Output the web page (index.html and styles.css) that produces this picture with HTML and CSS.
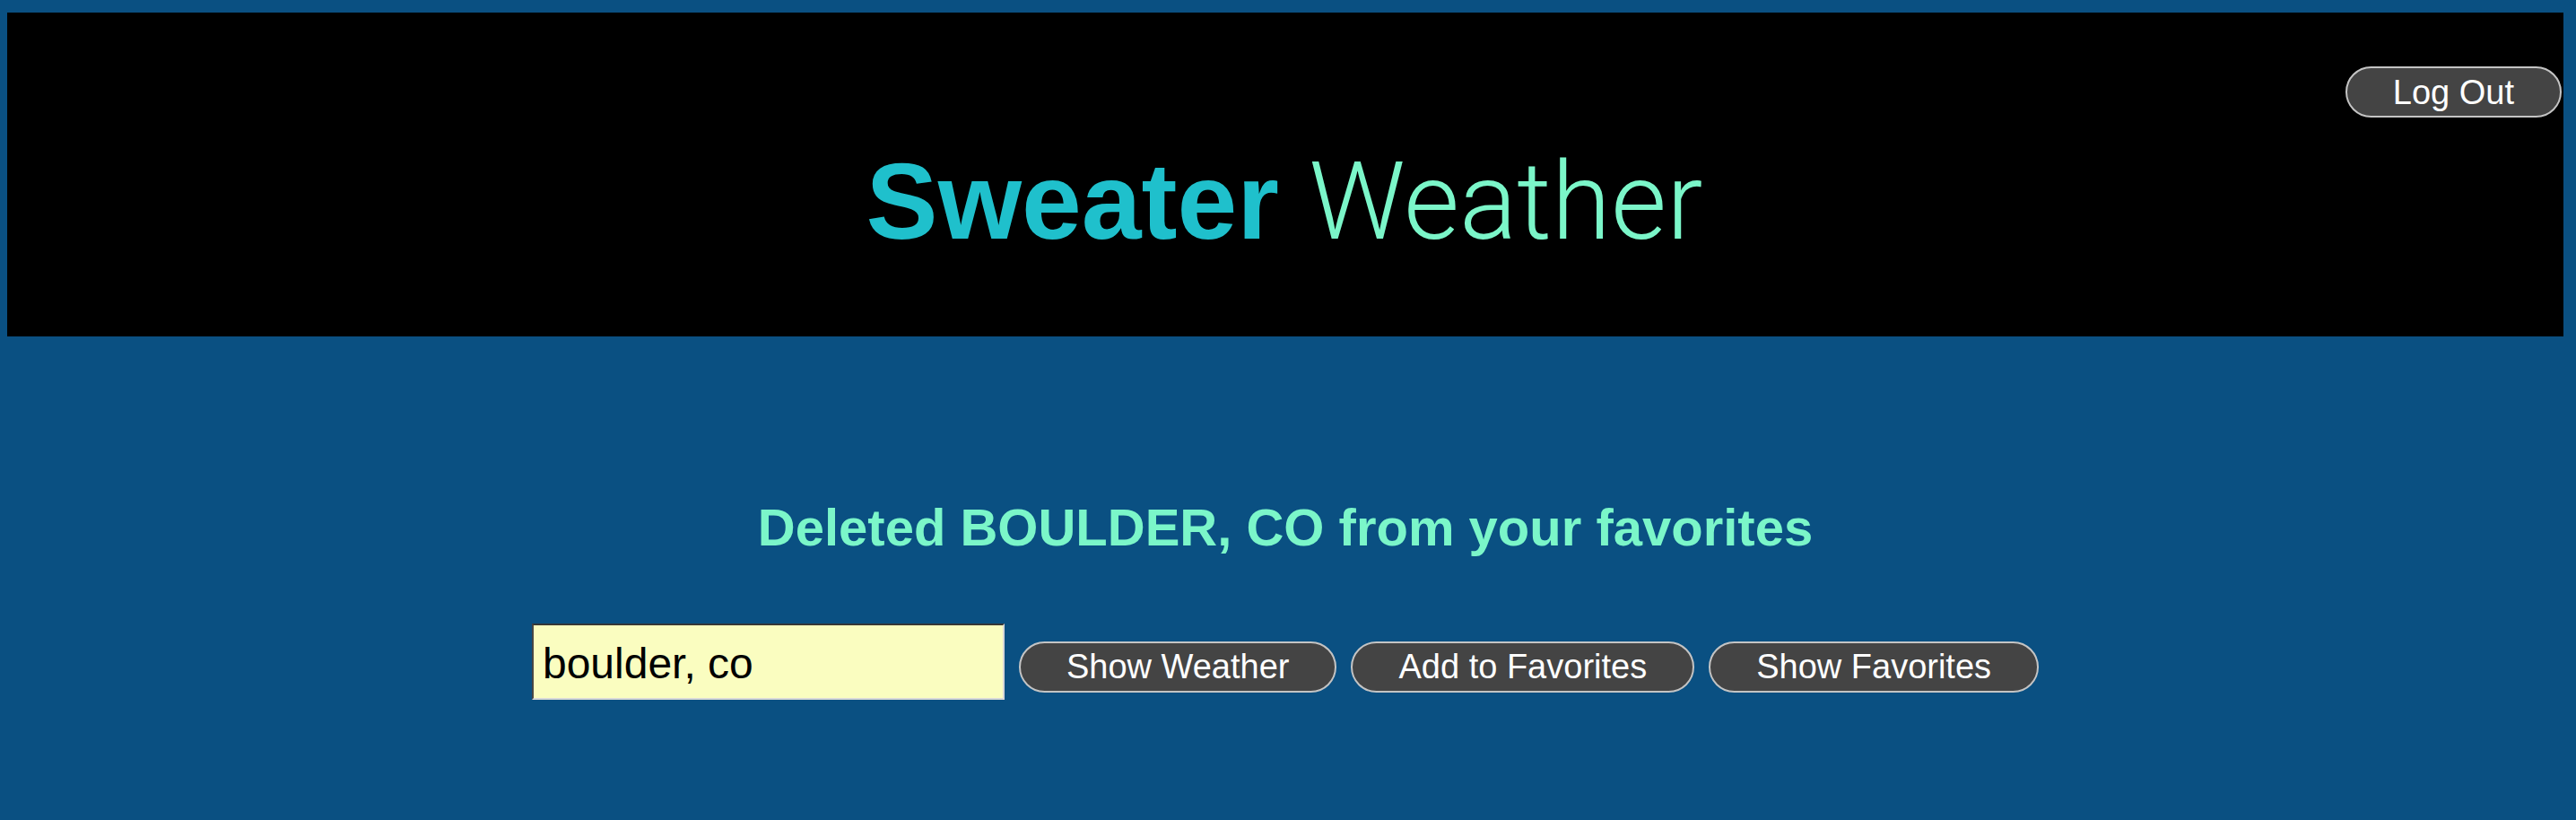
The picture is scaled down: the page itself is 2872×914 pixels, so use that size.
FILE: index.html
```html
<!DOCTYPE html>
<html>
<head>
<meta charset="utf-8">
<title>Sweater Weather</title>
<link rel="stylesheet" href="styles.css">
</head>
<body>
  <header class="site-header">
    <div class="header-top">
      <button class="btn">Log Out</button>
    </div>
    <h1 class="title"><span class="title-bold">Sweater</span> <span class="title-light">Weather</span></h1>
  </header>
  <main class="content">
    <h2 class="message">Deleted BOULDER, CO from your favorites</h2>
    <div class="search-row">
      <input class="search-input" type="text" value="boulder, co">
      <button class="btn">Show Weather</button>
      <button class="btn">Add to Favorites</button>
      <button class="btn">Show Favorites</button>
    </div>
  </main>
</body>
</html>
```
FILE: styles.css
```css
html, body {
  height: 100%;
}
body {
  margin: 14px 14px 0 8px;
  background: #0a5082;
  font-family: "Liberation Sans", Arial, sans-serif;
}
.site-header {
  background: #000;
  display: flex;
  flex-direction: column;
  padding: 60px 2px 81px 0;
}
.header-top {
  display: flex;
  justify-content: flex-end;
}
.title {
  margin: 24px 0 0;
  text-align: center;
  font-size: 120px;
  line-height: 138px;
  font-weight: normal;
  white-space: nowrap;
}
.title-bold {
  font-weight: bold;
  color: #1fc0cc;
}
.title-light {
  font-family: Roboto, "Liberation Sans", sans-serif;
  font-weight: 300;
  color: #7bf6c9;
}
.btn {
  font-family: "Liberation Sans", Arial, sans-serif;
  font-size: 38px;
  line-height: 44px;
  padding: 4.5px 51px;
  background: #444444;
  color: #ffffff;
  border: 2px solid #c4c4c4;
  border-radius: 29px;
  cursor: pointer;
}
.content {
  display: flex;
  flex-direction: column;
  align-items: center;
}
.message {
  margin: 179px 0 0;
  font-size: 58px;
  line-height: 67px;
  font-weight: bold;
  color: #7bf6c9;
}
.search-row {
  margin-top: 74px;
  display: flex;
  align-items: baseline;
  gap: 16px;
}
.search-input {
  box-sizing: border-box;
  width: 527px;
  height: 85px;
  padding: 4px 10px 0;
  font-family: "Liberation Sans", Arial, sans-serif;
  font-size: 48px;
  color: #000;
  background: #fafdc0;
  border: 2px inset #d8d8d8;
  border-top-color: #8a8a8a;
  border-left-color: #9a9a9a;
  outline: none;
}
```
